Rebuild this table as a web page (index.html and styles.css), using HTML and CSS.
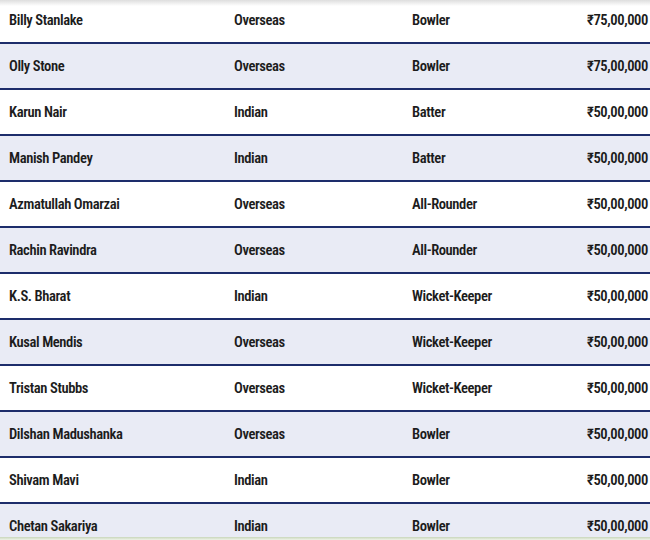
FILE: index.html
```html
<!DOCTYPE html>
<html>
<head>
<meta charset="utf-8">
<link rel="stylesheet" href="styles.css">
</head>
<body>
<div class="shade"></div>
<div class="table">
  <div class="row"><span class="c name">Billy Stanlake</span><span class="c type">Overseas</span><span class="c role">Bowler</span><span class="c price">₹75,00,000</span></div>
  <div class="row alt"><span class="c name">Olly Stone</span><span class="c type">Overseas</span><span class="c role">Bowler</span><span class="c price">₹75,00,000</span></div>
  <div class="row"><span class="c name">Karun Nair</span><span class="c type">Indian</span><span class="c role">Batter</span><span class="c price">₹50,00,000</span></div>
  <div class="row alt"><span class="c name">Manish Pandey</span><span class="c type">Indian</span><span class="c role">Batter</span><span class="c price">₹50,00,000</span></div>
  <div class="row"><span class="c name">Azmatullah Omarzai</span><span class="c type">Overseas</span><span class="c role">All-Rounder</span><span class="c price">₹50,00,000</span></div>
  <div class="row alt"><span class="c name">Rachin Ravindra</span><span class="c type">Overseas</span><span class="c role">All-Rounder</span><span class="c price">₹50,00,000</span></div>
  <div class="row"><span class="c name">K.S. Bharat</span><span class="c type">Indian</span><span class="c role">Wicket-Keeper</span><span class="c price">₹50,00,000</span></div>
  <div class="row alt"><span class="c name">Kusal Mendis</span><span class="c type">Overseas</span><span class="c role">Wicket-Keeper</span><span class="c price">₹50,00,000</span></div>
  <div class="row"><span class="c name">Tristan Stubbs</span><span class="c type">Overseas</span><span class="c role">Wicket-Keeper</span><span class="c price">₹50,00,000</span></div>
  <div class="row alt"><span class="c name">Dilshan Madushanka</span><span class="c type">Overseas</span><span class="c role">Bowler</span><span class="c price">₹50,00,000</span></div>
  <div class="row"><span class="c name">Shivam Mavi</span><span class="c type">Indian</span><span class="c role">Bowler</span><span class="c price">₹50,00,000</span></div>
  <div class="row alt"><span class="c name">Chetan Sakariya</span><span class="c type">Indian</span><span class="c role">Bowler</span><span class="c price">₹50,00,000</span></div>
</div>
<div class="foot-edge"></div>
</body>
</html>
```
FILE: styles.css
```css
html, body {
  margin: 0;
  padding: 0;
  background: #fff;
  overflow: hidden;
}
body {
  width: 650px;
  height: 540px;
  font-family: "Roboto Condensed", "Liberation Sans Narrow", Roboto, "Liberation Sans", sans-serif;
  font-size: 14.6px;
  font-weight: 600;
  letter-spacing: -0.4px;
  color: #1c1c1c;
}
.shade {
  position: absolute;
  left: 0;
  top: 0;
  width: 650px;
  height: 6px;
  background: linear-gradient(#dedede, rgba(255,255,255,0));
  z-index: 2;
}
.foot-edge {
  position: absolute;
  left: 0;
  top: 537px;
  width: 650px;
  height: 3px;
  background: linear-gradient(#c9d6bb, #eef3e8);
  z-index: 2;
}
.table {
  margin-top: -2px;
  display: flex;
  flex-direction: column;
}
.row {
  display: grid;
  grid-template-columns: 225px 178px 1fr auto;
  align-items: center;
  height: 44px;
  border-bottom: 2px solid #1d2d6b;
  padding: 0 2px 0 9px;
  background: #fff;
}
.row.alt {
  background: #e9ebf5;
}
.price {
  text-align: right;
}
```
